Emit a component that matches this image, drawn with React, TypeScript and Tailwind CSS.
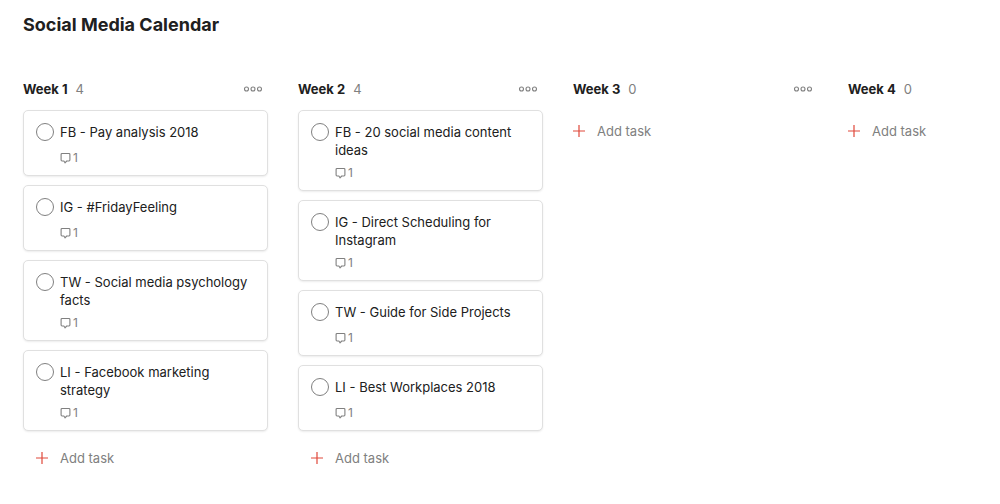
import { useState } from 'react';

type Column = {
    name: string;
    tasks: string[];
};

const columns: Column[] = [
    {
        name: 'Week 1',
        tasks: ['FB - Pay analysis 2018', 'IG - #FridayFeeling', 'TW - Social media psychology facts', 'LI - Facebook marketing strategy'],
    },
    {
        name: 'Week 2',
        tasks: ['FB - 20 social media content ideas', 'IG - Direct Scheduling for Instagram', 'TW - Guide for Side Projects', 'LI - Best Workplaces 2018'],
    },
    { name: 'Week 3', tasks: [] },
    { name: 'Week 4', tasks: [] },
];

function DotsIcon() {
    return (
        <svg width="20" height="8" viewBox="0 0 20 8" fill="none" stroke="#808080" strokeWidth="1.1">
            <circle cx="3.5" cy="4" r="2" />
            <circle cx="10" cy="4" r="2" />
            <circle cx="16.5" cy="4" r="2" />
        </svg>
    );
}

function CommentIcon() {
    return (
        <svg width="11" height="12" viewBox="0 0 11 12" fill="none" stroke="#808080" strokeWidth="1.1" strokeLinejoin="round">
            <path d="M2 1.5h7a.9.9 0 0 1 .9.9v5.7a.9.9 0 0 1-.9.9H6.7L5 10.800 3.900 9H2a.9.9 0 0 1-.9-.9V2.400a.9.9 0 0 1 .9-.9z" />
        </svg>
    );
}

function PlusIcon() {
    return (
        <svg width="12" height="12" viewBox="0 0 12 12" fill="none" stroke="#e0483a" strokeWidth="1.2">
            <path d="M6 0v12M0 6h12" />
        </svg>
    );
}

function TaskCard({ title }: { title: string }) {
    const [done, setDone] = useState(false);
    return (
        <li className="rounded-[5px] border border-[#e0e0e0] bg-white px-3 pt-3 pb-[9px] shadow-[0_1px_2px_rgba(0,0,0,0.08)]">
            <label className="flex min-h-[21px] items-start gap-1.5">
                <input
                    type="checkbox"
                    checked={done}
                    onChange={() => setDone(!done)}
                    className="size-[18px] shrink-0 appearance-none rounded-full border border-[#808080] checked:bg-[#808080]"
                />
                <span className="text-[13px] leading-[18px] text-[#202020]">{title}</span>
            </label>
            <p className="mt-1.5 flex items-center gap-0.5 pl-6 text-[12px] leading-4 text-[#808080]">
                <CommentIcon />
                1
            </p>
        </li>
    );
}

function BoardColumn({ name, tasks }: Column) {
    return (
        <section className="w-[245px] shrink-0">
            <header className="flex h-5 items-center justify-between pr-[5px]">
                <div className="flex items-center gap-2">
                    <h2 className="text-[13px] leading-5 font-bold text-[#202020]">{name}</h2>
                    <span className="text-[13px] leading-5 text-[#808080]">{tasks.length}</span>
                </div>
                <button aria-label={name + ' options'}>
                    <DotsIcon />
                </button>
            </header>
            {tasks.length > 0 && (
                <ul className="mt-[11px] flex flex-col gap-[9px]">
                    {tasks.map((task) => (
                        <TaskCard key={task} title={task} />
                    ))}
                </ul>
            )}
            <button className={tasks.length > 0 ? 'mt-[17px] flex items-center gap-3 pl-[13px] text-[#808080]' : 'mt-[22px] flex items-center gap-3 text-[#808080]'}>
                <PlusIcon />
                <span className="text-[13px] leading-5">Add task</span>
            </button>
        </section>
    );
}

export default function App() {
    return (
        <div className="min-h-screen overflow-hidden bg-white pt-[13px] pl-[23px] font-['Inter',sans-serif]">
            <h1 className="text-[18px] leading-6 font-bold text-[#202020]">Social Media Calendar</h1>
            <main className="mt-[42px] flex items-start gap-[30px]">
                {columns.map((column) => (
                    <BoardColumn key={column.name} {...column} />
                ))}
            </main>
        </div>
    );
}
